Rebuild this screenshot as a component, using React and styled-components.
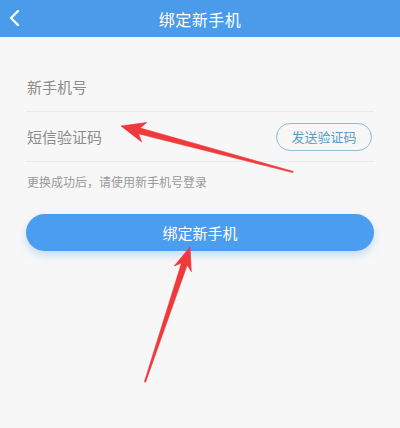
import React from "react";
import styled, { createGlobalStyle } from "styled-components";

const GlobalStyle = createGlobalStyle`
  html, body {
    margin: 0;
    padding: 0;
    background: #f7f7f7;
  }
  body {
    font-family: "Noto Sans CJK SC", "Noto Sans", sans-serif;
  }
`;

// red annotation arrows, tip/tail in page pixels
const arrows = [
  { tip: [121, 126], tail: [293, 172], head: 22, wing: 10 },
  { tip: [190, 247], tail: [145, 382], head: 21, wing: 9 },
];

function arrowPoints({ tip, tail, head, wing }) {
  const dx = tail[0] - tip[0];
  const dy = tail[1] - tip[1];
  const len = Math.hypot(dx, dy);
  const ux = dx / len;
  const uy = dy / len;
  const nx = -uy;
  const ny = ux;
  const at = (d, w) => [tip[0] + ux * d + nx * w, tip[1] + uy * d + ny * w];
  const pts = [
    tip,
    at(head + 2, wing),
    at(head - 3, 3),
    [tail[0] + nx * 0.6, tail[1] + ny * 0.6],
    [tail[0] - nx * 0.6, tail[1] - ny * 0.6],
    at(head - 3, -3),
    at(head + 2, -wing),
  ];
  return pts.map((p) => p[0].toFixed(1) + "," + p[1].toFixed(1)).join(" ");
}

const App = () => {
  return (
    <Page>
      <GlobalStyle />
      <Header>
        <BackButton>
          <svg width="12" height="18" viewBox="0 0 12 18">
            <path d="M10 2 L3 9 L10 16" fill="none" stroke="#fff" strokeWidth="2.4" strokeLinecap="round" strokeLinejoin="round" />
          </svg>
        </BackButton>
        <Title>绑定新手机</Title>
      </Header>
      <Form>
        <Row>
          <Label>新手机号</Label>
        </Row>
        <Row>
          <Label>短信验证码</Label>
          <SendButton>发送验证码</SendButton>
        </Row>
        <Hint>更换成功后，请使用新手机号登录</Hint>
        <SubmitButton>绑定新手机</SubmitButton>
      </Form>
      <Overlay width="400" height="428" viewBox="0 0 400 428">
        {arrows.map((a, i) => (
          <polygon key={i} points={arrowPoints(a)} fill="#f0393b" stroke="#e83234" strokeWidth="0.6" strokeLinejoin="round" />
        ))}
      </Overlay>
    </Page>
  );
};

const Page = styled.div`
  position: relative;
  width: 400px;
  height: 428px;
  overflow: hidden;
  background: #f7f7f7;
`;
const Header = styled.div`
  position: relative;
  height: 37px;
  background: #4a9be9;
  display: flex;
  align-items: center;
  justify-content: center;
`;
const BackButton = styled.div`
  position: absolute;
  left: 8px;
  top: 9px;
  display: flex;
`;
const Title = styled.div`
  color: #fff;
  font-size: 16px;
  letter-spacing: 0.5px;
`;
const Form = styled.div`
  padding: 25px 26px 0 26px;
  display: flex;
  flex-direction: column;
`;
const Row = styled.div`
  height: 49px;
  border-bottom: 1px solid #ebebeb;
  display: flex;
  align-items: center;
  justify-content: space-between;
  padding-left: 1px;
  padding-right: 2px;
`;
const Label = styled.span`
  font-size: 15px;
  color: #8c8c8c;
`;
const SendButton = styled.div`
  width: 94px;
  height: 26px;
  border: 1.5px solid #8fbdd3;
  border-radius: 15px;
  display: flex;
  align-items: center;
  justify-content: center;
  font-size: 13px;
  color: #5b9cc6;
`;
const Hint = styled.div`
  margin-top: 11px;
  font-size: 12px;
  line-height: 17px;
  color: #999;
  padding-left: 1px;
`;
const SubmitButton = styled.div`
  margin-top: 24px;
  height: 37px;
  border-radius: 19px;
  background: #4b9df0;
  box-shadow: 0 4px 8px rgba(75, 157, 240, 0.3);
  color: #fff;
  font-size: 15px;
  display: flex;
  align-items: center;
  justify-content: center;
`;
const Overlay = styled.svg`
  position: absolute;
  left: 0;
  top: 0;
  pointer-events: none;
`;

export default App;
